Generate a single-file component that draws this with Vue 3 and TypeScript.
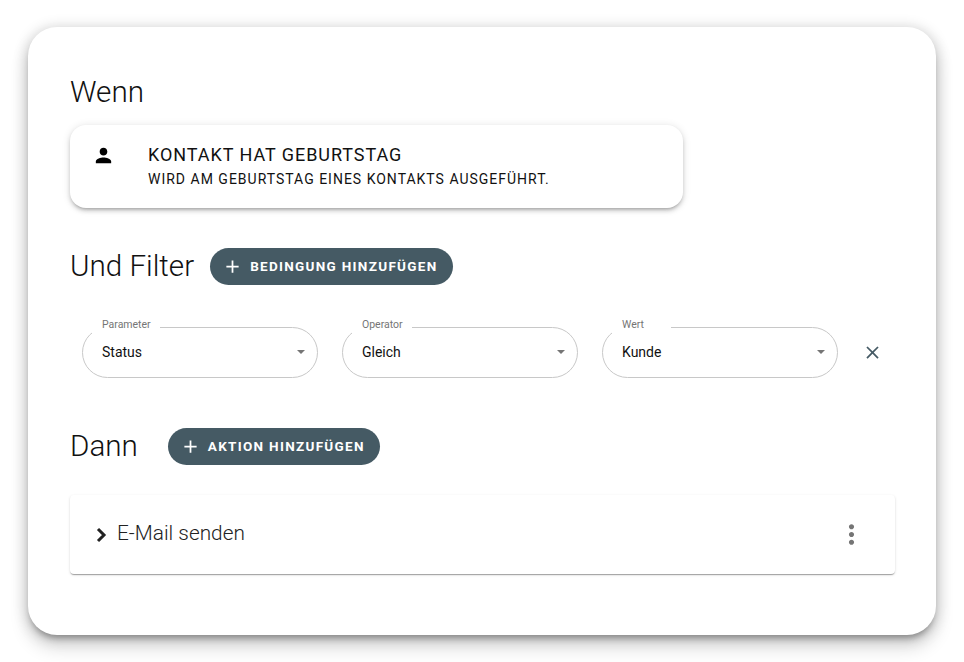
<script setup lang="ts">
interface FilterField {
  label: string
  value: string
}

const filters: FilterField[] = [
  {label: 'Parameter', value: 'Status'},
  {label: 'Operator', value: 'Gleich'},
  {label: 'Wert', value: 'Kunde'},
]
</script>

<template>
  <div class="page">
    <div class="card">
      <h2 class="title">Wenn</h2>

      <div class="trigger">
        <svg class="person" viewBox="0 0 24 24" width="23" height="23">
          <path d="M12 12c2.21 0 4-1.79 4-4s-1.79-4-4-4-4 1.79-4 4 1.79 4 4 4zm0 2c-2.67 0-8 1.34-8 4v2h16v-2c0-2.66-5.33-4-8-4z" />
        </svg>
        <div class="trigger-text">
          <div class="trigger-name">KONTAKT HAT GEBURTSTAG</div>
          <div class="trigger-desc">WIRD AM GEBURTSTAG EINES KONTAKTS AUSGEFÜHRT.</div>
        </div>
      </div>

      <div class="section-head filter-head">
        <h2 class="title">Und Filter</h2>
        <button class="add-btn">
          <svg viewBox="0 0 24 24" width="21" height="21"><path d="M19 13h-6v6h-2v-6H5v-2h6V5h2v6h6v2z" /></svg>
          BEDINGUNG HINZUFÜGEN
        </button>
      </div>

      <div class="filter-row">
        <fieldset v-for="f in filters" :key="f.label" class="select">
          <legend>{{ f.label }}</legend>
          <span class="select-value">{{ f.value }}</span>
          <span class="arrow"></span>
        </fieldset>
        <svg class="close" viewBox="0 0 24 24" width="21" height="21">
          <path d="M19 6.41 17.59 5 12 10.59 6.41 5 5 6.41 10.59 12 5 17.59 6.41 19 12 13.41 17.59 19 19 17.59 13.41 12z" />
        </svg>
      </div>

      <div class="section-head action-head">
        <h2 class="title">Dann</h2>
        <button class="add-btn">
          <svg viewBox="0 0 24 24" width="21" height="21"><path d="M19 13h-6v6h-2v-6H5v-2h6V5h2v6h6v2z" /></svg>
          AKTION HINZUFÜGEN
        </button>
      </div>

      <div class="action">
        <svg class="chevron" viewBox="0 0 24 24" width="24" height="24">
          <polyline points="9,6 15,12 9,18" />
        </svg>
        <span class="action-name">E-Mail senden</span>
        <svg class="dots" viewBox="0 0 24 24" width="31" height="31">
          <path d="M12 8c1.1 0 2-.9 2-2s-.9-2-2-2-2 .9-2 2 .9 2 2 2zm0 2c-1.1 0-2 .9-2 2s.9 2 2 2 2-.9 2-2-.9-2-2-2zm0 6c-1.1 0-2 .9-2 2s.9 2 2 2 2-.9 2-2-.9-2-2-2z" />
        </svg>
      </div>
    </div>
  </div>
</template>

<style>
html, body {
  margin: 0;
  background: #fff;
}
</style>

<style scoped>
.page {
  width: 964px;
  height: 662px;
  padding: 27px 28px;
  box-sizing: border-box;
  font-family: Roboto, "Liberation Sans", sans-serif;
  overflow: hidden;
}
.card {
  height: 608px;
  box-sizing: border-box;
  padding: 46px 41px 0 42px;
  background: #fff;
  border-radius: 29px;
  box-shadow: 0 6px 6px -3px rgba(0, 0, 0, 0.3), 0 12px 18px 1px rgba(0, 0, 0, 0.14), 0 2px 14px 2px rgba(0, 0, 0, 0.16);
}
.title {
  margin: 0;
  font-size: 29.6px;
  line-height: 38px;
  font-weight: 300;
  color: #111;
}
.trigger {
  display: flex;
  align-items: flex-start;
  width: 613px;
  height: 83px;
  box-sizing: border-box;
  margin-top: 14px;
  padding: 18px 22px;
  border-radius: 16px;
  background: #fff;
  box-shadow: 0 3px 3px -2px rgba(0, 0, 0, 0.2), 0 3px 4px 0 rgba(0, 0, 0, 0.14), 0 1px 8px 0 rgba(0, 0, 0, 0.12);
}
.person {
  margin: 1px 0 0 0;
  fill: #000;
}
.trigger-text {
  margin-left: 33px;
}
.trigger-name {
  font-size: 18px;
  line-height: 24px;
  letter-spacing: 0.95px;
  color: #111;
}
.trigger-desc {
  font-size: 14px;
  line-height: 24px;
  letter-spacing: 1px;
  color: #111;
}
.section-head {
  display: flex;
  align-items: center;
}
.filter-head {
  margin-top: 39px;
  gap: 16px;
}
.action-head {
  margin-top: 49px;
  gap: 30px;
}
.add-btn {
  display: flex;
  align-items: center;
  gap: 7px;
  height: 37px;
  padding: 0 15px 0 12px;
  border: none;
  border-radius: 19px;
  background: #455a64;
  color: #fff;
  font-family: inherit;
  font-size: 13.5px;
  font-weight: 700;
  letter-spacing: 1.3px;
}
.add-btn svg {
  fill: #fff;
}
.filter-row {
  display: flex;
  gap: 24px;
  margin-top: 33px;
  padding-left: 12px;
}
.select {
  display: flex;
  align-items: center;
  width: 236px;
  height: 60px;
  box-sizing: border-box;
  min-width: 0;
  margin: 0;
  padding: 0 0 9px 19px;
  border: 1px solid #c8c8c8;
  border-radius: 26px;
}
.select legend {
  min-width: 59px;
  height: 18px;
  box-sizing: border-box;
  margin-left: -10px;
  padding: 0 9px 0 10px;
  font-size: 10.5px;
  line-height: 14px;
  color: #757575;
}
.select-value {
  font-size: 14px;
  color: #111;
}
.arrow {
  width: 0;
  height: 0;
  margin-left: auto;
  margin-right: 12px;
  border-left: 4.5px solid transparent;
  border-right: 4.5px solid transparent;
  border-top: 4.5px solid #757575;
}
.close {
  align-self: flex-end;
  margin-bottom: 15px;
  fill: #455a64;
}
.action {
  display: flex;
  align-items: center;
  height: 79px;
  box-sizing: border-box;
  margin-top: 30px;
  padding: 0 28px 0 19px;
  border-radius: 4px;
  background: #fff;
  box-shadow: 0 2px 1px -1px rgba(0, 0, 0, 0.2), 0 1px 1px 0 rgba(0, 0, 0, 0.14), 0 1px 3px 0 rgba(0, 0, 0, 0.12);
}
.chevron {
  fill: none;
  stroke: #222;
  stroke-width: 3;
}
.action-name {
  flex: 1;
  margin: 0 0 3px 4px;
  font-size: 20.8px;
  font-weight: 300;
  color: #222;
}
.dots {
  fill: #757575;
}
</style>
